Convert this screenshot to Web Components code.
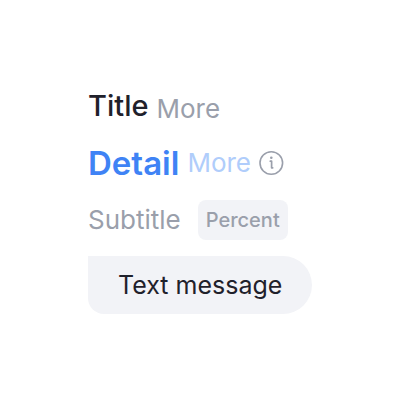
<!DOCTYPE html>
<html lang="en">
<head>
<meta charset="utf-8">
<title>Message details</title>
<style>
body { margin: 0; background: #fff; font-family: Inter, "Liberation Sans", sans-serif; }
</style>
</head>
<body>
<message-card></message-card>
<script>
class InfoButton extends HTMLElement {
  constructor() {
    super();
    this.attachShadow({ mode: "open" }).innerHTML = `
      <style>
        :host { display: block; }
        button { display: block; padding: 0; border: 0; background: none; cursor: pointer; }
        svg { display: block; }
      </style>
      <button type="button" aria-label="Information">
        <svg width="25" height="26" viewBox="0 0 25 26" fill="none" stroke="#9a9fab" stroke-width="1.6">
          <circle cx="12.3" cy="13" r="11.3"/>
          <path d="M11.3 11.2h1.3v6.6h1.1" stroke-width="1.7" stroke-linecap="round" stroke-linejoin="round"/>
          <circle cx="12.3" cy="7.8" r="1.3" fill="#9a9fab" stroke="none"/>
        </svg>
      </button>`;
  }
}
customElements.define("info-button", InfoButton);

class TextRow extends HTMLElement {
  constructor() {
    super();
    this.attachShadow({ mode: "open" }).innerHTML = `
      <style>
        :host { display: flex; align-items: var(--row-align, center); gap: 8px; }
        .main { color: var(--main-color); font-size: var(--main-size); font-weight: var(--main-weight); line-height: var(--main-line); }
        .more { color: var(--more-color); font-size: 26px; line-height: 34px; }
      </style>
      <span class="main"><slot name="main"></slot></span>
      <span class="more"><slot name="more"></slot></span>
      <slot></slot>`;
  }
}
customElements.define("text-row", TextRow);

class PercentTag extends HTMLElement {
  constructor() {
    super();
    this.attachShadow({ mode: "open" }).innerHTML = `
      <style>
        :host { display: block; padding: 0 8px; border-radius: 8px; background: #f2f3f7; color: #9a9fab; font-size: 20px; font-weight: 500; line-height: 40px; }
      </style>
      <slot></slot>`;
  }
}
customElements.define("percent-tag", PercentTag);

class MessageBubble extends HTMLElement {
  constructor() {
    super();
    this.attachShadow({ mode: "open" }).innerHTML = `
      <style>
        :host { display: block; padding: 0 30px; border-radius: 0 29px 29px 16px; background: #f2f3f7; color: #1f212b; font-size: 25px; line-height: 58px; }
      </style>
      <slot></slot>`;
  }
}
customElements.define("message-bubble", MessageBubble);

class MessageCard extends HTMLElement {
  constructor() {
    super();
    this.attachShadow({ mode: "open" }).innerHTML = `
      <style>
        :host { display: flex; flex-direction: column; align-items: flex-start; gap: 16px; padding: 86px 0 0 88px; }
        .title { --row-align: flex-end; --main-color: #1f212b; --main-size: 29px; --main-line: 40px; --main-weight: 500; --more-color: #9a9fab; }
        .detail { --main-color: #3f83f5; --main-size: 33px; --main-line: 42px; --main-weight: 600; --more-color: #b0cdfb; }
        .subtitle { display: flex; gap: 17px; color: #9a9fab; font-size: 26px; line-height: 40px; }
      </style>
      <text-row class="title"><span slot="main">Title</span><span slot="more">More</span></text-row>
      <text-row class="detail"><span slot="main">Detail</span><span slot="more">More</span><info-button></info-button></text-row>
      <div class="subtitle"><span>Subtitle</span><percent-tag>Percent</percent-tag></div>
      <message-bubble>Text message</message-bubble>`;
  }
}
customElements.define("message-card", MessageCard);
</script>
</body>
</html>
